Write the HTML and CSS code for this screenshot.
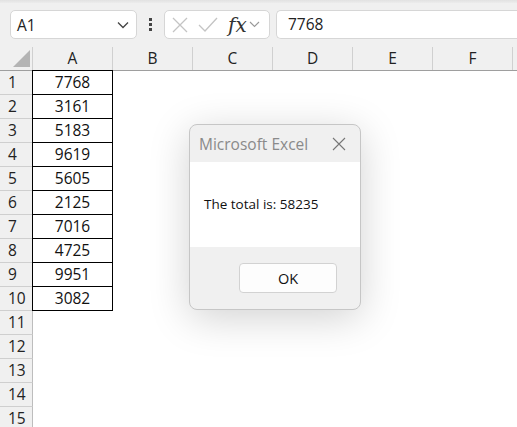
FILE: index.html
```html
<!DOCTYPE html>
<html lang="en">
<head>
  <meta charset="UTF-8">
  <title>Excel</title>
  <link rel="stylesheet" href="styles.css">
</head>
<body>
<div class="ribbon-edge"></div>
<div class="formula-bar">
  <div class="name-box">
    <span>A1</span>
    <svg width="12" height="8" viewBox="0 0 12 8"><path d="M1 1.5 L6 6.5 L11 1.5" fill="none" stroke="#444" stroke-width="1.3"/></svg>
  </div>
  <div class="dots"><i></i><i></i><i></i></div>
  <div class="fx-box">
    <svg width="18" height="18" viewBox="0 0 18 18"><path d="M2 2 L16 16 M16 2 L2 16" stroke="#c4c4c4" stroke-width="1.3"/></svg>
    <svg width="20" height="18" viewBox="0 0 20 18"><path d="M1 9 L7 15 L19 2" fill="none" stroke="#c4c4c4" stroke-width="1.3"/></svg>
    <span class="fx">fx</span>
    <svg width="11" height="7" viewBox="0 0 11 7"><path d="M1 1 L5.5 5.5 L10 1" fill="none" stroke="#999" stroke-width="1.1"/></svg>
  </div>
  <div class="input-box">7768</div>
</div>

<div class="sheet">
  <div class="row head">
    <div class="corner"><b></b></div>
    <div class="col">A</div><div class="col">B</div><div class="col">C</div>
    <div class="col">D</div><div class="col">E</div><div class="col">F</div>
  </div>
  <div class="row"><div class="num">1</div><div class="cell">7768</div></div>
  <div class="row"><div class="num">2</div><div class="cell">3161</div></div>
  <div class="row"><div class="num">3</div><div class="cell">5183</div></div>
  <div class="row"><div class="num">4</div><div class="cell">9619</div></div>
  <div class="row"><div class="num">5</div><div class="cell">5605</div></div>
  <div class="row"><div class="num">6</div><div class="cell">2125</div></div>
  <div class="row"><div class="num">7</div><div class="cell">7016</div></div>
  <div class="row"><div class="num">8</div><div class="cell">4725</div></div>
  <div class="row"><div class="num">9</div><div class="cell">9951</div></div>
  <div class="row"><div class="num">10</div><div class="cell">3082</div></div>
  <div class="row"><div class="num">11</div></div>
  <div class="row"><div class="num">12</div></div>
  <div class="row"><div class="num">13</div></div>
  <div class="row"><div class="num">14</div></div>
  <div class="row"><div class="num">15</div></div>
</div>

<div class="dialog">
  <div class="dialog-title">
    <span>Microsoft Excel</span>
    <svg width="14" height="14" viewBox="0 0 14 14"><path d="M1 1 L13 13 M13 1 L1 13" stroke="#777" stroke-width="1.1"/></svg>
  </div>
  <div class="dialog-body">The total is: 58235</div>
  <div class="dialog-foot">
    <button class="btn">OK</button>
  </div>
</div>
</body>
</html>
```

FILE: styles.css
```css
* {
  margin: 0;
  padding: 0;
  box-sizing: border-box;
}

body {
  width: 517px;
  height: 427px;
  overflow: hidden;
  background: #fff;
  font-family: "Open Sans", "Noto Sans", sans-serif;
  color: #222;
  position: relative;
}

.ribbon-edge {
  height: 3px;
  background: linear-gradient(#e2e2e2, #ececec);
}

.formula-bar {
  height: 44px;
  background: #f0f0f0;
  display: flex;
  align-items: flex-start;
  padding: 7px 0 0 10px;
}

.name-box {
  width: 127px;
  height: 29px;
  background: #fff;
  border: 1px solid #d6d6d6;
  border-radius: 5px;
  display: flex;
  align-items: center;
  justify-content: space-between;
  padding: 0 7px 0 6px;
  font-size: 15.5px;
  color: #222;
}

.dots {
  width: 27px;
  height: 29px;
  display: flex;
  flex-direction: column;
  align-items: center;
  justify-content: center;
  gap: 2px;
}

.dots i {
  width: 3px;
  height: 3px;
  background: #444;
}

.fx-box {
  width: 106px;
  height: 29px;
  background: #fff;
  border: 1px solid #d6d6d6;
  border-radius: 5px;
  display: flex;
  align-items: center;
  padding: 0 2px 0 6px;
  gap: 9px;
}

.fx-box .fx {
  font-family: "DejaVu Serif", "Liberation Serif", serif;
  font-style: italic;
  font-size: 20px;
  color: #333;
  margin-left: 1px;
  margin-right: -7px;
  line-height: 1;
}

.input-box {
  flex: 1;
  height: 29px;
  margin-left: 6px;
  background: #fff;
  border: 1px solid #d6d6d6;
  border-right: none;
  border-radius: 5px 0 0 5px;
  padding-left: 11px;
  font-size: 15.5px;
  line-height: 27px;
  color: #222;
}

.sheet {
  font-size: 15.5px;
}

.row {
  display: grid;
  grid-template-columns: 33px 80px 1fr;
  height: 24px;
}

.row.head {
  grid-template-columns: 33px repeat(6, 80px);
  height: 24px;
  background: #f0f0f0;
  border-bottom: 1px solid #9e9e9e;
}

.corner {
  position: relative;
  border-right: 1px solid #d0d0d0;
}

.corner b {
  position: absolute;
  right: 2px;
  bottom: 3px;
  width: 0;
  height: 0;
  border-left: 17px solid transparent;
  border-bottom: 17px solid #b4b4b4;
}

.col {
  text-align: center;
  line-height: 23px;
  border-right: 1px solid #d0d0d0;
}

.num {
  background: #f0f0f0;
  border-right: 1px solid #bdbdbd;
  border-bottom: 1px solid #cfcfcf;
  padding-left: 8px;
  line-height: 23px;
}

.cell {
  border-right: 1px solid #000;
  border-bottom: 1px solid #000;
  border-left: 1px solid #000;
  margin-left: -1px;
  text-align: center;
  line-height: 23px;
  color: #111;
}

.row:nth-child(2) .cell {
  border-top: 1px solid #000;
  margin-top: -1px;
  height: 25px;
}

.dialog {
  position: absolute;
  left: 189px;
  top: 124px;
  width: 172px;
  height: 186px;
  border: 1px solid #c6c6c6;
  border-radius: 8px;
  overflow: hidden;
  background: #f0f0f0;
  box-shadow: 0 8px 40px rgba(0, 0, 0, .18);
  display: flex;
  flex-direction: column;
}

.dialog-title {
  height: 37px;
  display: flex;
  align-items: center;
  justify-content: space-between;
  padding: 0 14px 0 9px;
  font-size: 15.5px;
  color: #8a8a8a;
}

.dialog-body {
  height: 85px;
  background: #fff;
  padding-left: 14px;
  font-size: 13.5px;
  line-height: 85px;
  color: #111;
}

.dialog-foot {
  flex: 1;
  display: flex;
  justify-content: flex-end;
  padding: 16px 23px 0 0;
}

.btn {
  width: 98px;
  height: 30px;
  background: #fdfdfd;
  border: 1px solid #d2d2d2;
  border-radius: 4px;
  font-family: "Open Sans", "Noto Sans", sans-serif;
  font-size: 14.5px;
  color: #111;
}
```
